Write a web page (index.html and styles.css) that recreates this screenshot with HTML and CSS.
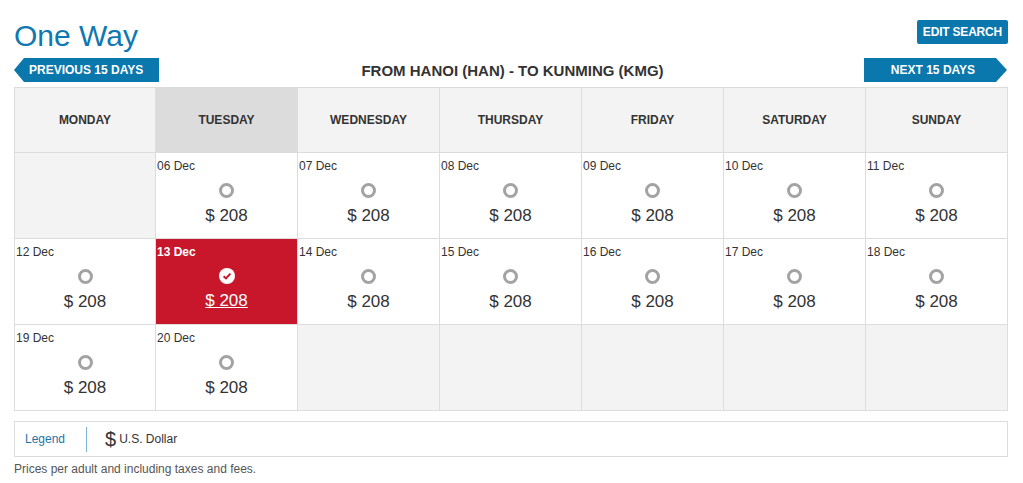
FILE: index.html
```html
<!DOCTYPE html>
<html lang="en">
<head>
  <meta charset="UTF-8">
  <title>One Way - Select Date</title>
  <link rel="stylesheet" href="styles.css">
</head>
<body>
  <div class="page">
    <div class="top">
      <h1>One Way</h1>
      <button class="edit">EDIT SEARCH</button>
    </div>

    <div class="nav">
      <button class="arrow prev">PREVIOUS 15 DAYS</button>
      <div class="route">FROM HANOI (HAN) - TO KUNMING (KMG)</div>
      <button class="arrow next">NEXT 15 DAYS</button>
    </div>

    <div class="calendar">
      <div class="head">MONDAY</div>
      <div class="head today">TUESDAY</div>
      <div class="head">WEDNESDAY</div>
      <div class="head">THURSDAY</div>
      <div class="head">FRIDAY</div>
      <div class="head">SATURDAY</div>
      <div class="head">SUNDAY</div>

      <div class="day empty"></div>
      <div class="day"><span class="date">06 Dec</span><span class="radio"></span><span class="price">$ 208</span></div>
      <div class="day"><span class="date">07 Dec</span><span class="radio"></span><span class="price">$ 208</span></div>
      <div class="day"><span class="date">08 Dec</span><span class="radio"></span><span class="price">$ 208</span></div>
      <div class="day"><span class="date">09 Dec</span><span class="radio"></span><span class="price">$ 208</span></div>
      <div class="day"><span class="date">10 Dec</span><span class="radio"></span><span class="price">$ 208</span></div>
      <div class="day"><span class="date">11 Dec</span><span class="radio"></span><span class="price">$ 208</span></div>

      <div class="day"><span class="date">12 Dec</span><span class="radio"></span><span class="price">$ 208</span></div>
      <div class="day selected">
        <span class="date">13 Dec</span>
        <span class="check">
          <svg width="16" height="16" viewBox="0 0 16 16"><circle cx="8" cy="8" r="8" fill="#fff"/><path d="M4.6 8.2 L7 10.4 L11.4 5.6" fill="none" stroke="#c8172a" stroke-width="2"/></svg>
        </span>
        <span class="price">$ 208</span>
      </div>
      <div class="day"><span class="date">14 Dec</span><span class="radio"></span><span class="price">$ 208</span></div>
      <div class="day"><span class="date">15 Dec</span><span class="radio"></span><span class="price">$ 208</span></div>
      <div class="day"><span class="date">16 Dec</span><span class="radio"></span><span class="price">$ 208</span></div>
      <div class="day"><span class="date">17 Dec</span><span class="radio"></span><span class="price">$ 208</span></div>
      <div class="day"><span class="date">18 Dec</span><span class="radio"></span><span class="price">$ 208</span></div>

      <div class="day"><span class="date">19 Dec</span><span class="radio"></span><span class="price">$ 208</span></div>
      <div class="day"><span class="date">20 Dec</span><span class="radio"></span><span class="price">$ 208</span></div>
      <div class="day empty"></div>
      <div class="day empty"></div>
      <div class="day empty"></div>
      <div class="day empty"></div>
      <div class="day empty"></div>
    </div>

    <div class="legend">
      <span class="legend-title">Legend</span>
      <span class="legend-item"><span class="sign">$</span> U.S. Dollar</span>
    </div>

    <p class="note">Prices per adult and including taxes and fees.</p>
  </div>
</body>
</html>
```

FILE: styles.css
```css
body {
  margin: 0;
  font-family: 'Liberation Sans', Arial, sans-serif;
  color: #333;
  background: #fff;
}

.page {
  width: 994px;
  padding: 0 14px;
}

.top {
  display: flex;
  justify-content: space-between;
  align-items: flex-start;
  height: 58px;
}

h1 {
  margin: 19px 0 0;
  font-size: 30px;
  font-weight: normal;
  color: #0f78b2;
  line-height: 34px;
}

.edit {
  margin: 20px 0 0;
  height: 24px;
  padding: 0 6px;
  border: none;
  border-radius: 2px;
  background: #0a78ad;
  color: #fff;
  font-family: inherit;
  font-size: 12px;
  font-weight: bold;
  letter-spacing: -0.2px;
}

.nav {
  display: flex;
  justify-content: space-between;
  align-items: center;
  height: 24px;
  margin-bottom: 5px;
}

.arrow {
  position: relative;
  height: 24px;
  border: none;
  background: #0a78ad;
  color: #fff;
  font-family: inherit;
  font-size: 12px;
  font-weight: bold;
  padding: 0;
}

.arrow::before {
  content: "";
  position: absolute;
  top: 0;
  border-top: 12px solid transparent;
  border-bottom: 12px solid transparent;
}

.prev {
  width: 135px;
  margin-left: 10px;
  padding-left: 5px;
  text-align: left;
}

.prev::before {
  left: -10px;
  border-right: 10px solid #0a78ad;
}

.next {
  width: 132px;
  margin-right: 12px;
  padding-left: 6px;
}

.next::before {
  right: -11px;
  border-left: 11px solid #0a78ad;
}

.route {
  font-size: 15px;
  font-weight: bold;
  color: #333;
  margin-left: 2px;
}

.calendar {
  display: grid;
  grid-template-columns: 141px repeat(6, 142px);
  grid-template-rows: 65px repeat(3, 86px);
  border-top: 1px solid #ddd;
  border-left: 1px solid #ddd;
}

.head,
.day {
  border-right: 1px solid #ddd;
  border-bottom: 1px solid #ddd;
}

.head {
  display: flex;
  align-items: center;
  justify-content: center;
  background: #f3f3f3;
  font-size: 12px;
  font-weight: bold;
  color: #333;
}

.head.today {
  background: #dcdcdc;
}

.day {
  display: flex;
  flex-direction: column;
  align-items: center;
  background: #fff;
}

.day.empty {
  background: #f3f3f3;
}

.date {
  align-self: flex-start;
  margin: 6px 0 0 1px;
  font-size: 12px;
  line-height: 14px;
}

.radio {
  width: 9px;
  height: 9px;
  margin-top: 10px;
  border: 3px solid #a3a3a3;
  border-radius: 50%;
}

.check {
  height: 16px;
  margin-top: 9px;
}

.price {
  margin-top: 8px;
  font-size: 17px;
  line-height: 20px;
  color: #333;
}

.selected {
  background: #c8172a;
  color: #fff;
}

.selected .date {
  font-weight: bold;
}

.selected .price {
  color: #fff;
  text-decoration: underline;
  margin-top: 7px;
}

.legend {
  display: flex;
  align-items: center;
  height: 34px;
  margin-top: 10px;
  border: 1px solid #ddd;
  font-size: 12px;
}

.legend-title {
  color: #1f73a8;
  padding: 0 21px 0 10px;
  border-right: 1px solid #7db5d6;
  line-height: 25px;
}

.legend-item {
  display: flex;
  align-items: center;
  margin-left: 18px;
  color: #333;
}

.sign {
  font-size: 20px;
  margin-right: 3px;
}

.note {
  margin: 5px 0 0;
  font-size: 12px;
  color: #555;
}
```
